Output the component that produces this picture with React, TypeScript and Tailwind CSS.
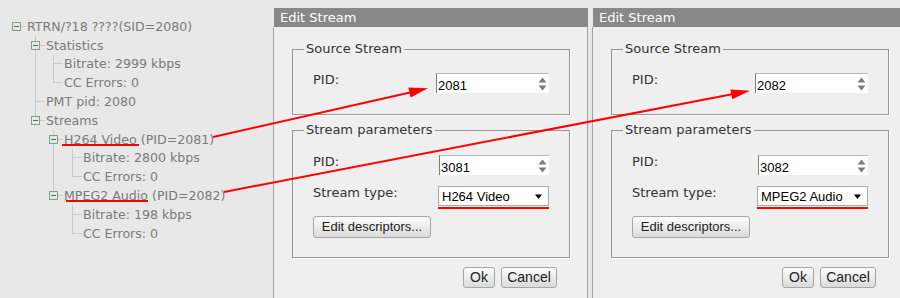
import React from 'react';

type TreeNode = {
  label: React.ReactNode;
  children?: TreeNode[];
};

// annotation underline drawn under a tree label
function Marked({ children, line }: { children: React.ReactNode; line: string }) {
  return (
    <span className="relative inline-block">
      {children}
      <span className={`absolute bottom-px h-[2px] bg-[#f00] ${line}`} />
    </span>
  );
}

const tree: TreeNode = {
  label: 'RTRN/?18 ????(SID=2080)',
  children: [
    {
      label: 'Statistics',
      children: [{ label: 'Bitrate: 2999 kbps' }, { label: 'CC Errors: 0' }],
    },
    { label: 'PMT pid: 2080' },
    {
      label: 'Streams',
      children: [
        {
          label: (
            <>
              <Marked line="-left-[2px] -right-[2px]">H264 Video</Marked> (PID=2081)
            </>
          ),
          children: [{ label: 'Bitrate: 2800 kbps' }, { label: 'CC Errors: 0' }],
        },
        {
          label: (
            <>
              <Marked line="left-[2px] right-0">MPEG2 Audio</Marked> (PID=2082)
            </>
          ),
          children: [{ label: 'Bitrate: 198 kbps' }, { label: 'CC Errors: 0' }],
        },
      ],
    },
  ],
};

const childIndent = ['ml-[19px]', 'ml-[18px]', 'ml-[19px]'];

function Toggle() {
  return (
    <span className="relative -ml-[4px] flex h-[9px] w-[9px] shrink-0 items-center justify-center border border-[#8b9b8b] bg-[#e3eae3]">
      <span className="h-px w-[5px] bg-[#5d6d5d]" />
    </span>
  );
}

function TreeItem({ node, depth, last }: { node: TreeNode; depth: number; last: boolean }) {
  const kids = node.children ?? [];
  return (
    <li className="relative">
      {depth > 0 && (
        <span className={`absolute left-0 top-0 w-px bg-[#c9c9c9] ${last ? 'h-[9.4px]' : 'bottom-0'}`} />
      )}
      <div className="relative flex h-[18.8px] items-center">
        {kids.length > 0 ? (
          <>
            <Toggle />
            <span className="h-px w-[5px] bg-[#c9c9c9]" />
          </>
        ) : (
          <span className="h-px w-[10px] bg-[#c9c9c9]" />
        )}
        <span className="ml-px whitespace-nowrap leading-[15px]">{node.label}</span>
      </div>
      {kids.length > 0 && (
        <ul className={childIndent[depth]}>
          {kids.map((k, i) => (
            <TreeItem key={i} node={k} depth={depth + 1} last={i === kids.length - 1} />
          ))}
        </ul>
      )}
    </li>
  );
}

function NumberBox({ value, w }: { value: string; w: string }) {
  return (
    <div
      className={`flex h-[20px] ${w} items-stretch border-l border-t border-l-[#7f7f7f] border-t-[#b8b8b8] bg-white font-['Liberation_Sans',Arial,sans-serif] text-[13px] text-black`}
    >
      <span className="flex-1 pl-px pt-[4px] leading-[15px]">{value}</span>
      <svg className="mr-[2px] self-center" width="9" height="14" viewBox="0 0 9 14">
        <path d="M0.5 5.5 4.5 0.5 8.5 5.5Z M0.5 8.5 4.5 13.5 8.5 8.5Z" fill="#7c7c7c" />
      </svg>
    </div>
  );
}

function SelectBox({ value }: { value: string }) {
  return (
    <div className="relative flex h-[20px] w-[111px] items-center justify-between border border-[#a9a9a9] bg-white pl-[3px] pr-[6px] font-['Liberation_Sans',Arial,sans-serif] text-[13px] text-black">
      <span className="pt-px leading-[15px]">{value}</span>
      <svg width="7" height="5" viewBox="0 0 7 5">
        <path d="M0 0.5h7L3.5 5z" fill="#000" />
      </svg>
      <span className="absolute -left-px -right-px top-[20px] h-[2px] bg-[#f00]" />
    </div>
  );
}

function Btn({ children, className }: { children: React.ReactNode; className: string }) {
  return (
    <button
      type="button"
      className={`flex items-center justify-center rounded-[3px] border border-[#a6a6a6] bg-linear-to-b from-[#fdfdfd] to-[#dadada] font-['Liberation_Sans',Arial,sans-serif] text-[#222] ${className}`}
    >
      {children}
    </button>
  );
}

function EditStream({ srcPid, pid, type, width }: { srcPid: string; pid: string; type: string; width: string }) {
  return (
    <div className={`flex shrink-0 flex-col pt-[8px] ${width}`}>
      <div className="ml-px flex h-[19px] items-center bg-[#888888] pl-[6px] text-[13px] text-white">Edit Stream</div>
      <div className="flex-1 border-x border-[#a3a3a3] bg-[#efefef] pl-[18px] text-[13px] text-[#333]">
        <fieldset className="mt-[14px] w-[278px] border border-[#959595] shadow-[1px_1px_0_#fff]">
          <legend className="ml-[11px] px-[2px] leading-[16px]">Source Stream</legend>
          <div className="flex items-start justify-between px-[20px] pb-[21px] pt-[16px]">
            <span className="leading-[14px]">PID:</span>
            <NumberBox value={srcPid} w="w-[113px]" />
          </div>
        </fieldset>

        <fieldset className="mt-[7px] w-[278px] border border-[#959595] shadow-[1px_1px_0_#fff]">
          <legend className="ml-[11px] px-[2px] leading-[16px]">Stream parameters</legend>
          <div className="flex flex-col px-[20px] pb-[19px] pt-[17px]">
            <div className="flex items-start justify-between">
              <span className="leading-[14px]">PID:</span>
              <NumberBox value={pid} w="w-[110px]" />
            </div>
            <div className="mt-[11px] flex items-start justify-between">
              <span className="leading-[14px]">Stream type:</span>
              <SelectBox value={type} />
            </div>
            <Btn className="mt-[10px] h-[22px] w-[118px] text-[13px]">Edit descriptors...</Btn>
          </div>
        </fieldset>

        <div className="mt-[9px] flex w-[278px] justify-end gap-[6px] pr-[13px]">
          <Btn className="h-[21px] w-[32px] text-[14px]">Ok</Btn>
          <Btn className="h-[21px] w-[56px] text-[14px]">Cancel</Btn>
        </div>
      </div>
    </div>
  );
}

export default function App() {
  return (
    <div className="relative flex h-[298px] w-[900px] overflow-hidden bg-[#e8e8e8] font-['DejaVu_Sans',Verdana,sans-serif]">
      {/* stream tree */}
      <div className="w-[273px] shrink-0 pl-[16px] pt-[17px] text-[12.6px] text-[#7b7b7b]">
        <ul>
          <TreeItem node={tree} depth={0} last />
        </ul>
      </div>

      <EditStream srcPid="2081" pid="3081" type="H264 Video" width="w-[315px]" />
      <div className="w-[4px] shrink-0" />
      <EditStream srcPid="2082" pid="3082" type="MPEG2 Audio" width="w-[320px]" />

      {/* annotation arrows */}
      <svg className="pointer-events-none absolute left-0 top-0" width="900" height="298" viewBox="0 0 900 298">
        <line x1="213" y1="137" x2="410" y2="92.5" stroke="#f00" strokeWidth="2" />
        <polygon points="428,88.3 410.6,97.4 408.4,87.6" fill="#f00" />
        <line x1="224" y1="192" x2="732" y2="94.3" stroke="#f00" strokeWidth="2" />
        <polygon points="750,90.7 732.3,99.2 730.4,89.4" fill="#f00" />
      </svg>
    </div>
  );
}
